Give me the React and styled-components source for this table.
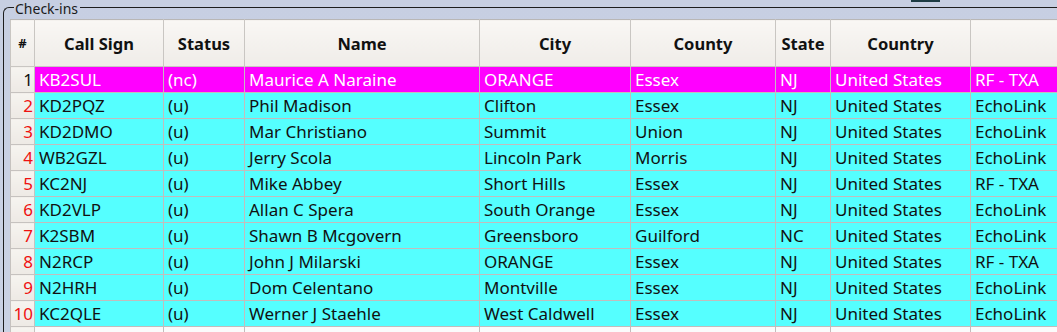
import React from "react";
import styled, { createGlobalStyle } from "styled-components";

const GlobalStyle = createGlobalStyle`
  html, body {
    margin: 0;
    padding: 0;
    background: #c9d1e3;
    font-family: "Noto Sans", "Open Sans", sans-serif;
    overflow: hidden;
  }
`;

const columns = [
  { key: "num", title: "#", width: 24 },
  { key: "call", title: "Call Sign", width: 129 },
  { key: "status", title: "Status", width: 81 },
  { key: "name", title: "Name", width: 235 },
  { key: "city", title: "City", width: 151 },
  { key: "county", title: "County", width: 145 },
  { key: "state", title: "State", width: 55 },
  { key: "country", title: "Country", width: 140 },
  { key: "source", title: "", width: 110 },
];

const tableWidth = columns.reduce((s, c) => s + c.width, 0);

const rows = [
  ["KB2SUL", "(nc)", "Maurice A Naraine", "ORANGE", "Essex", "NJ", "United States", "RF - TXA"],
  ["KD2PQZ", "(u)", "Phil Madison", "Clifton", "Essex", "NJ", "United States", "EchoLink"],
  ["KD2DMO", "(u)", "Mar Christiano", "Summit", "Union", "NJ", "United States", "EchoLink"],
  ["WB2GZL", "(u)", "Jerry Scola", "Lincoln Park", "Morris", "NJ", "United States", "EchoLink"],
  ["KC2NJ", "(u)", "Mike Abbey", "Short Hills", "Essex", "NJ", "United States", "RF - TXA"],
  ["KD2VLP", "(u)", "Allan C Spera", "South Orange", "Essex", "NJ", "United States", "EchoLink"],
  ["K2SBM", "(u)", "Shawn B Mcgovern", "Greensboro", "Guilford", "NC", "United States", "EchoLink"],
  ["N2RCP", "(u)", "John J Milarski", "ORANGE", "Essex", "NJ", "United States", "RF - TXA"],
  ["N2HRH", "(u)", "Dom Celentano", "Montville", "Essex", "NJ", "United States", "EchoLink"],
  ["KC2QLE", "(u)", "Werner J Staehle", "West Caldwell", "Essex", "NJ", "United States", "EchoLink"],
];

const Page = styled.div`
  position: relative;
  width: 1057px;
  height: 332px;
  overflow: hidden;
  background: linear-gradient(180deg, #c7cfe2 0%, #cad2e4 100%);
`;

const TopButtonEdge = styled.div`
  position: absolute;
  top: 0;
  left: 911px;
  width: 29px;
  height: 2px;
  background: #1d3c44;
`;

const Group = styled.section`
  padding-left: 3px;
`;

const TitleRow = styled.div`
  display: flex;
  align-items: flex-start;
  height: 16px;
`;

const Corner = styled.div`
  width: 11px;
  height: 9px;
  margin-top: 7px;
  border-top: 1px solid #1e1e1e;
  border-left: 1px solid #1e1e1e;
  border-top-left-radius: 6px;
  box-sizing: border-box;
`;

const Label = styled.span`
  padding: 0 2px 0 1px;
  font-size: 14px;
  line-height: 17px;
  color: #1a1a1a;
  white-space: nowrap;
`;

const Line = styled.div`
  flex: 1;
  margin-top: 7px;
  border-top: 1px solid #1e1e1e;
`;

const GroupBody = styled.div`
  border-left: 1px solid #1e1e1e;
  padding: 3px 0 0 6px;
`;

const Grid = styled.table`
  border-collapse: collapse;
  table-layout: fixed;
  width: ${tableWidth}px;
  font-size: 17px;
`;

const HeadCell = styled.th`
  height: 46px;
  padding: 0;
  font-weight: 700;
  color: #111;
  text-align: center;
  white-space: nowrap;
  background: linear-gradient(180deg, #f9f7f4 0%, #efece8 100%);
  border: 1px solid #c9c6c2;
  border-top-color: #b9b7b6;
  font-size: ${(p) => (p.$small ? "13px" : "16.5px")};
`;

const Row = styled.tr`
  height: 26px;
`;

const NumCell = styled.td`
  padding: 0 1px 0 0;
  text-align: right;
  white-space: nowrap;
  color: ${(p) => (p.$first ? "#111" : "#ee1111")};
  background: linear-gradient(180deg, #f6f4f0 0%, #ede9e4 100%);
  border: 1px solid #c6c2bf;
  line-height: 25px;
`;

const Cell = styled.td`
  padding: 0 0 0 4px;
  white-space: nowrap;
  overflow: hidden;
  line-height: 25px;
  color: ${(p) => (p.$hot ? "#ffffff" : "#111111")};
  background: ${(p) => (p.$hot ? "#ff00ff" : p.$empty ? "#fbfbfb" : "#55ffff")};
  border: 1px solid #c3bcbc;
`;

export default function App() {
  return (
    <Page>
      <GlobalStyle />
      <TopButtonEdge />
      <Group>
        <TitleRow>
          <Corner />
          <Label>Check-ins</Label>
          <Line />
        </TitleRow>
        <GroupBody>
          <Grid>
            <colgroup>
              {columns.map((c) => (
                <col key={c.key} style={{ width: c.width }} />
              ))}
            </colgroup>
            <thead>
              <tr>
                {columns.map((c) => (
                  <HeadCell key={c.key} $small={c.key === "num"}>
                    {c.title}
                  </HeadCell>
                ))}
              </tr>
            </thead>
            <tbody>
              {rows.map((r, i) => (
                <Row key={r[0]}>
                  <NumCell $first={i === 0}>{i + 1}</NumCell>
                  {r.map((v, j) => (
                    <Cell key={j} $hot={i === 0}>
                      {v}
                    </Cell>
                  ))}
                </Row>
              ))}
              <Row>
                <NumCell $first />
                {columns.slice(1).map((c) => (
                  <Cell key={c.key} $empty />
                ))}
              </Row>
            </tbody>
          </Grid>
        </GroupBody>
      </Group>
    </Page>
  );
}
